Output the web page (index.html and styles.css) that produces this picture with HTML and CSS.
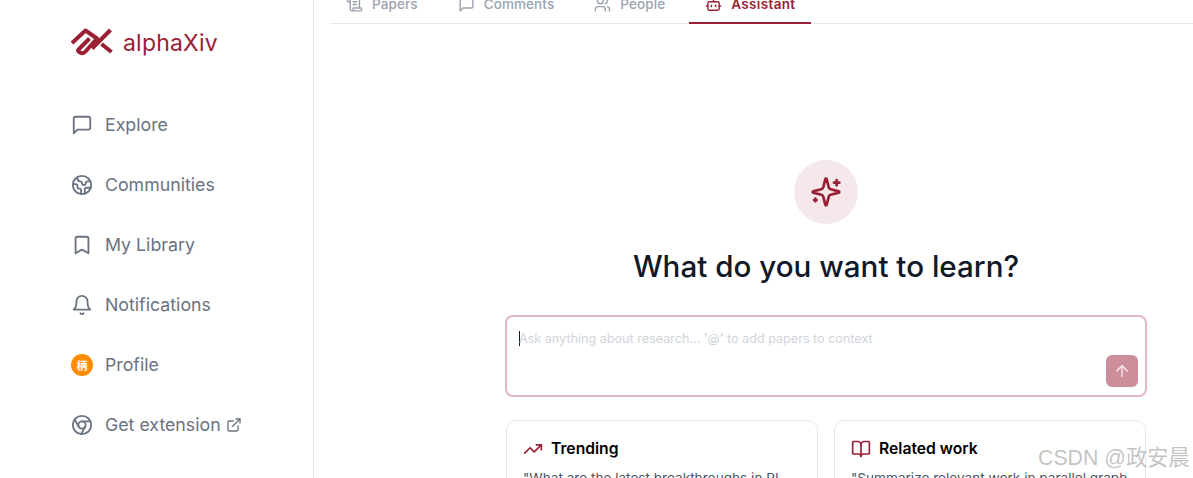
FILE: index.html
```html
<!DOCTYPE html>
<html lang="en">
<head>
<meta charset="utf-8">
<title>alphaXiv</title>
<link rel="stylesheet" href="styles.css">
</head>
<body>
<div class="page">
  <aside class="sidebar">
    <div class="brand">
      <svg class="logo" viewBox="0 0 42 30" fill="none" stroke="currentColor" stroke-width="4" stroke-linecap="butt" stroke-linejoin="round"><path d="M1 15 14.500 2.500 26 10.500 14.500 23.500c-3.500 4-9-.5-7-2L18.500 10.500"/><path d="M39.500 2 21 20.500"/><path d="M30.500 16 40.500 24"/></svg>
      <span class="brand-name">alphaXiv</span>
    </div>
    <nav class="nav">
      <a class="nav-item"><svg class="ico" viewBox="0 0 24 24"><path d="M21 15a2 2 0 0 1-2 2H7l-4 4V5a2 2 0 0 1 2-2h14a2 2 0 0 1 2 2z"/></svg><span class="nav-label">Explore</span></a>
      <a class="nav-item"><svg class="ico" viewBox="0 0 24 24"><path d="M21.54 15H17a2 2 0 0 0-2 2v4.54"/><path d="M7 3.34V5a3 3 0 0 0 3 3a2 2 0 0 1 2 2c0 1.1.9 2 2 2a2 2 0 0 0 2-2c0-1.1.9-2 2-2h3.17"/><path d="M11 21.95V18a2 2 0 0 0-2-2a2 2 0 0 1-2-2v-1a2 2 0 0 0-2-2H2.05"/><circle cx="12" cy="12" r="10"/></svg><span class="nav-label">Communities</span></a>
      <a class="nav-item"><svg class="ico" viewBox="0 0 24 24"><path d="m19 21-7-4-7 4V5a2 2 0 0 1 2-2h10a2 2 0 0 1 2 2v16z"/></svg><span class="nav-label">My Library</span></a>
      <a class="nav-item"><svg class="ico" viewBox="0 0 24 24"><path d="M6 8a6 6 0 0 1 12 0c0 7 3 9 3 9H3s3-2 3-9"/><path d="M10.3 21a1.94 1.94 0 0 0 3.4 0"/></svg><span class="nav-label">Notifications</span></a>
      <a class="nav-item"><span class="avatar">柄</span><span class="nav-label">Profile</span></a>
      <a class="nav-item"><svg class="ico" viewBox="0 0 24 24"><circle cx="12" cy="12" r="10"/><circle cx="12" cy="12" r="4"/><path d="M21.17 8H12"/><path d="M3.95 6.06 8.54 14"/><path d="M10.88 21.94 15.46 14"/></svg><span class="nav-label">Get extension</span><svg class="ico-small" viewBox="0 0 24 24"><path d="M18 13v6a2 2 0 0 1-2 2H5a2 2 0 0 1-2-2V8a2 2 0 0 1 2-2h6"/><path d="M15 3h6v6"/><path d="M10 14 21 3"/></svg></a>
    </nav>
  </aside>
  <main class="main">
    <div class="tabs">
      <a class="tab"><svg class="tab-ico" viewBox="0 0 24 24"><path d="M15 12h-5"/><path d="M15 8h-5"/><path d="M19 17V5a2 2 0 0 0-2-2H4"/><path d="M8 21h12a2 2 0 0 0 2-2v-1a1 1 0 0 0-1-1H11a1 1 0 0 0-1 1v1a2 2 0 1 1-4 0V5a2 2 0 1 0-4 0v2a1 1 0 0 0 1 1h3"/></svg><span>Papers</span></a>
      <a class="tab"><svg class="tab-ico" viewBox="0 0 24 24"><path d="M21 15a2 2 0 0 1-2 2H7l-4 4V5a2 2 0 0 1 2-2h14a2 2 0 0 1 2 2z"/></svg><span>Comments</span></a>
      <a class="tab"><svg class="tab-ico" viewBox="0 0 24 24"><path d="M16 21v-2a4 4 0 0 0-4-4H6a4 4 0 0 0-4 4v2"/><circle cx="9" cy="7" r="4"/><path d="M22 21v-2a4 4 0 0 0-3-3.870"/><path d="M16 3.130a4 4 0 0 1 0 7.750"/></svg><span>People</span></a>
      <a class="tab tab-active"><svg class="tab-ico" viewBox="0 0 24 24"><path d="M12 8V4H8"/><rect x="4" y="8" width="16" height="12" rx="2"/><path d="M2 14h2"/><path d="M20 14h2"/><path d="M15 13v2"/><path d="M9 13v2"/></svg><span>Assistant</span></a>
    </div>
    <section class="content">
      <div class="spark"><svg class="spark-ico" viewBox="0 0 24 24"><path d="M9.940 15.500A2 2 0 0 0 8.500 14.060l-6.140-1.580a.5.5 0 0 1 0-.96L8.500 9.940A2 2 0 0 0 9.940 8.500l1.580-6.140a.5.5 0 0 1 .96 0L14.060 8.500A2 2 0 0 0 15.500 9.940l6.140 1.580a.5.5 0 0 1 0 .96L15.500 14.060a2 2 0 0 0-1.440 1.440l-1.580 6.140a.5.5 0 0 1-.96 0z"/><path d="M20 3v4"/><path d="M22 5h-4"/><path d="M4 17v2"/><path d="M5 18H3"/></svg></div>
      <h1 class="title">What do you want to learn?</h1>
      <div class="prompt">
        <div class="placeholder"><span class="caret"></span>Ask anything about research... '@' to add papers to context</div>
        <button class="send"><svg class="send-ico" viewBox="0 0 24 24"><path d="m5 12 7-7 7 7"/><path d="M12 19V5"/></svg></button>
      </div>
      <div class="cards">
        <div class="card">
          <div class="card-head"><svg class="card-ico" viewBox="0 0 24 24"><path d="m22 7-8.500 8.500-5-5L2 17"/><path d="M16 7h6v6"/></svg><span>Trending</span></div>
          <p class="card-text">"What are the latest breakthroughs in RL</p>
        </div>
        <div class="card">
          <div class="card-head"><svg class="card-ico" viewBox="0 0 24 24"><path d="M12 7v14"/><path d="M3 18a1 1 0 0 1-1-1V4a1 1 0 0 1 1-1h5a4 4 0 0 1 4 4 4 4 0 0 1 4-4h5a1 1 0 0 1 1 1v13a1 1 0 0 1-1 1h-6a3 3 0 0 0-3 3 3 3 0 0 0-3-3z"/></svg><span>Related work</span></div>
          <p class="card-text">"Summarize relevant work in parallel graph</p>
        </div>
      </div>
    </section>
  </main>
</div>
<div class="watermark">CSDN @政安晨</div>
</body>
</html>
```
FILE: styles.css
```css
* { box-sizing: border-box; }
html, body { margin: 0; height: 478px; overflow: hidden; background: #fff; }
body { font-family: "Inter", "Noto Sans CJK SC", sans-serif; position: relative; }
.page { display: flex; height: 478px; overflow: hidden; }
.sidebar { width: 314px; flex: none; border-right: 1px solid #e5e7eb; padding: 26px 0 0 71px; }
.brand { display: flex; align-items: center; gap: 10px; height: 34px; color: #9a2036; }
.logo { width: 42px; height: 30px; flex: none; }
.brand-name { font-size: 23px; letter-spacing: 0.2px; }
.nav { display: flex; flex-direction: column; margin-top: 35px; }
.nav-item { display: flex; align-items: center; height: 60px; color: #6b7280; font-size: 17.75px; }
.nav-label { margin-bottom: 2px; }
.ico { width: 22px; height: 22px; margin-right: 12px; flex: none; fill: none; stroke: currentColor; stroke-width: 2; stroke-linecap: round; stroke-linejoin: round; }
.ico-small { width: 16px; height: 16px; margin-left: 5px; fill: none; stroke: currentColor; stroke-width: 2; stroke-linecap: round; stroke-linejoin: round; }
.avatar { width: 22px; height: 22px; margin-right: 12px; border-radius: 50%; background: #ff8c00; color: #fff; font-size: 11px; display: flex; align-items: center; justify-content: center; font-family: "Noto Sans CJK SC", sans-serif; font-weight: 700; }
.main { flex: 1; min-width: 0; padding-left: 16px; overflow: hidden; }
.tabs { display: flex; gap: 8px; height: 24px; border-bottom: 1px solid #e5e7eb; align-items: flex-end; }
.tab { display: flex; align-items: center; height: 32px; flex: none; padding: 0 16px 6px 16px; margin-bottom: -1px; gap: 9px; font-size: 13.5px; letter-spacing: 0.1px; font-weight: 500; color: #9ca3af; border-bottom: 2px solid transparent; }
.tab-active { color: #9a2036; border-bottom-color: #9a2036; letter-spacing: 0.35px; font-weight: 600; }
.tab-ico { width: 17px; height: 17px; flex: none; fill: none; stroke: currentColor; stroke-width: 2; stroke-linecap: round; stroke-linejoin: round; }
.content { display: flex; flex-direction: column; align-items: center; width: 642px; margin-left: 175px; padding-top: 136px; }
.spark { width: 64px; height: 64px; border-radius: 50%; background: #f4e8ea; display: flex; align-items: center; justify-content: center; }
.spark-ico { width: 32px; height: 32px; fill: none; stroke: #9a2036; stroke-width: 2; stroke-linecap: round; stroke-linejoin: round; }
.title { margin: 24px 0 0; font-size: 29.6px; line-height: 36px; font-weight: 550; color: #111827; white-space: nowrap; }
.prompt { position: relative; width: 642px; height: 82px; margin-top: 31px; border: 2px solid #e3b8c1; border-radius: 8px; padding: 13px 12px; }
.placeholder { font-size: 12.6px; line-height: 17px; color: #d1d5db; display: flex; align-items: center; }
.caret { width: 1px; height: 15px; margin-right: -1px; background: #111827; }
.send { position: absolute; right: 7px; bottom: 8px; width: 32px; height: 32px; border: 0; border-radius: 6px; padding: 0; background: #cd8e9b; display: flex; align-items: center; justify-content: center; }
.send-ico { width: 18px; height: 18px; fill: none; stroke: #fff; stroke-width: 1.8; stroke-linecap: round; stroke-linejoin: round; opacity: .85; }
.cards { display: grid; grid-template-columns: 312px 312px; gap: 16px; margin-top: 23px; }
.card { height: 90px; border: 1px solid #e5e7eb; border-radius: 10px; padding: 18px 16px; }
.card-head { display: flex; align-items: center; gap: 8px; font-size: 15.7px; line-height: 20px; font-weight: 600; color: #000; }
.card-ico { width: 20px; height: 20px; fill: none; stroke: #9a2036; stroke-width: 2; stroke-linecap: round; stroke-linejoin: round; }
.card-text { margin: 9px 0 0; font-size: 13.6px; line-height: 20px; color: #4b5563; white-space: nowrap; }
.watermark { position: absolute; left: 1038px; top: 444px; font-size: 21.3px; line-height: 28px; color: rgba(120, 120, 120, .45); font-family: "Liberation Sans", "Noto Sans CJK SC", sans-serif; white-space: nowrap; }
```
